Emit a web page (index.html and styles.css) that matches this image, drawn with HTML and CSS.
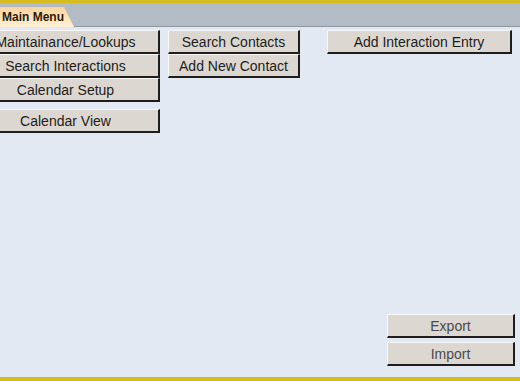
FILE: index.html
```html
<!DOCTYPE html>
<html lang="en">
<head>
  <meta charset="UTF-8">
  <title>Main Menu</title>
  <link rel="stylesheet" href="styles.css">
</head>
<body>
  <div class="screen">
    <div class="topbar"></div>
    <div class="tabstrip">
      <div class="tab">Main Menu</div>
    </div>
    <div class="main">
      <div class="menu">
        <div class="col col-left">
          <button class="btn">Maintainance/Lookups</button>
          <button class="btn">Search Interactions</button>
          <button class="btn">Calendar Setup</button>
          <button class="btn spaced">Calendar View</button>
        </div>
        <div class="col col-mid">
          <button class="btn">Search Contacts</button>
          <button class="btn">Add New Contact</button>
        </div>
        <div class="col col-right">
          <button class="btn">Add Interaction Entry</button>
        </div>
      </div>
      <div class="io">
        <button class="btn muted">Export</button>
        <button class="btn muted">Import</button>
      </div>
    </div>
    <div class="bottombar"></div>
  </div>
</body>
</html>
```

FILE: styles.css
```css
body {
  margin: 0;
  padding: 0;
  font-family: "Liberation Sans", Arial, sans-serif;
  overflow: hidden;
}
.screen {
  display: flex;
  flex-direction: column;
  width: 520px;
  height: 381px;
  background-color: #e3e9f3;
  overflow: hidden;
}
.topbar {
  height: 3px;
  background-color: #d6bd1e;
}
.tabstrip {
  height: 23px;
  background-color: #b3bbc5;
  border-bottom: 1px solid #8e969f;
  display: flex;
  align-items: flex-end;
}
.tab {
  height: 20px;
  line-height: 20px;
  width: 74px;
  padding-left: 2px;
  box-sizing: border-box;
  font-size: 12px;
  font-weight: bold;
  color: #2a1a0a;
  background: linear-gradient(to bottom, #fbd49c, #fff0d6);
  clip-path: polygon(0 0, 64px 0, 74px 100%, 0 100%);
  margin-bottom: -1px;
}
.main {
  flex: 1;
  display: flex;
  flex-direction: column;
  justify-content: space-between;
  padding-top: 3px;
  padding-bottom: 11px;
}
.menu {
  display: flex;
  align-items: flex-start;
}
.col {
  display: flex;
  flex-direction: column;
}
.col-left {
  width: 188px;
  margin-left: -28px;
}
.col-mid {
  width: 132px;
  margin-left: 8px;
}
.col-right {
  width: 185px;
  margin-left: 27px;
}
.btn {
  height: 24px;
  padding: 0;
  font-family: "Liberation Sans", Arial, sans-serif;
  font-size: 14px;
  color: #1c1c1c;
  background-color: #dcd8d1;
  border-top: 1px solid #f7f7f7;
  border-left: 1px solid #f7f7f7;
  border-right: 2px solid #1e1e1e;
  border-bottom: 2px solid #1e1e1e;
  text-align: center;
  white-space: nowrap;
}
.spaced {
  margin-top: 7px;
}
.io {
  display: flex;
  flex-direction: column;
  align-self: flex-end;
  width: 128px;
  margin-right: 5px;
  gap: 4px;
}
.muted {
  color: #4a4a4a;
}
.bottombar {
  height: 4px;
  background-color: #d6bd1e;
}
```
